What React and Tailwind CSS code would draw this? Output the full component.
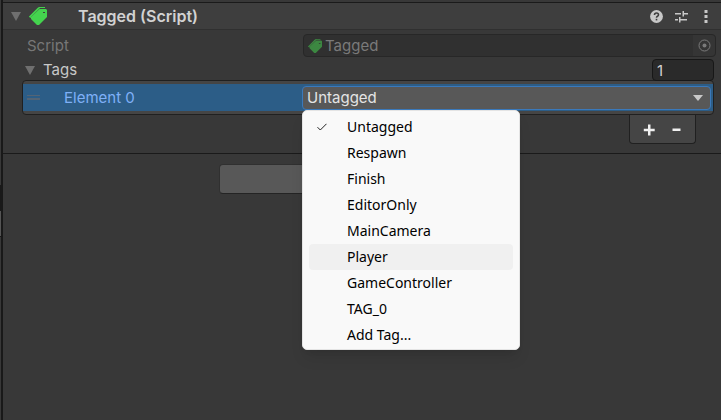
import React from "react";

const TAGS = [
  "Untagged",
  "Respawn",
  "Finish",
  "EditorOnly",
  "MainCamera",
  "Player",
  "GameController",
  "TAG_0",
  "Add Tag...",
];

function TagIcon({ className }) {
  return (
    <svg viewBox="0 0 18 18" className={className} aria-hidden="true">
      <path d="M0 9.5 8.5 1 10 0h6v1h-5L2 10v1L0 10z" fill="currentColor" />
      <path
        fillRule="evenodd"
        d="M10.5 2H17l1 1v7l-8 8H8l-6-6v-2zM14 5v1h2V5z"
        fill="currentColor"
      />
    </svg>
  );
}

function Triangle({ className }) {
  return (
    <svg viewBox="0 0 10 9" className={className} aria-hidden="true">
      <path d="M0 0h10L5 9z" fill="currentColor" />
    </svg>
  );
}

function Header() {
  return (
    <header className="flex h-[27px] items-center border-b border-[#303030] bg-[#3e3e3e] px-2">
      <button type="button" aria-label="Collapse component" className="text-[#6f6f6f]">
        <Triangle className="block h-[9px] w-[10px]" />
      </button>
      <TagIcon className="ml-2 h-[18px] w-[18px] text-[#44d34e]" />
      <h1 className="ml-[31px] flex-1 text-base leading-5 font-semibold text-[#d2d2d2]">Tagged (Script)</h1>
      <div className="flex items-center gap-3 text-[#c8c8c8]">
        <button type="button" aria-label="Help">
          <svg viewBox="0 0 13 13" className="block h-[13px] w-[13px]">
            <circle cx="6.5" cy="6.5" r="6.4" fill="currentColor" />
            <path d="M4.5 5q0-2 2-2t2 1.8q0 .9-1 1.4t-1 1.5" fill="none" stroke="#3e3e3e" strokeWidth="1.6" />
            <path d="M5.7 8.8h1.6v1.6H5.7z" fill="#3e3e3e" />
          </svg>
        </button>
        <button type="button" aria-label="Presets">
          <svg viewBox="0 0 13 13" className="block h-[13px] w-[13px]">
            <path d="M0 3h6v1.4H0zM7.500 1H9v5.500H7.500zM9 3h4v1.400H9zM0 9h3v1.400H0zM4 7h1.500v5.500H4zM5.500 9H12v1.400H5.500z" fill="currentColor" />
          </svg>
        </button>
        <button type="button" aria-label="More options" className="w-[13px]">
          <svg viewBox="0 0 13 13" className="block h-[13px] w-[13px]">
            <path d="M4.500 0h3v3h-3zM4.500 5h3v3h-3zM4.500 10h3v3h-3z" fill="currentColor" />
          </svg>
        </button>
      </div>
    </header>
  );
}

function TagMenu() {
  return (
    <ul
      role="listbox"
      aria-label="Tag"
      className="absolute top-full left-0 z-10 w-[218px] rounded-[5px] border border-[#e4e4e4] bg-[#f9f9f9] px-[6px] pt-[3px] pb-[1px] font-['Noto_Sans','Open_Sans',sans-serif] text-sm text-black shadow-lg"
    >
      {TAGS.map((tag) => (
        <li
          key={tag}
          role="option"
          aria-selected={tag === "Untagged"}
          className={`flex h-[26px] items-center rounded-[4px] ${tag === "Player" ? "bg-[#f0f0f0]" : ""}`}
        >
          <span className="flex w-[38px] pl-2">
            {tag === "Untagged" && (
              <svg viewBox="0 0 10 8" className="h-2 w-[10px]" aria-hidden="true">
                <path d="M.5 4.2 3.3 7 9.5.8" fill="none" stroke="#222" />
              </svg>
            )}
          </span>
          {tag}
        </li>
      ))}
    </ul>
  );
}

function ScriptRow() {
  return (
    <div className="flex h-[23px] items-center">
      <label htmlFor="script" className="w-[276px] text-[#777]">
        Script
      </label>
      <div className="flex h-[23px] min-w-0 flex-1 items-center rounded-[4px] border border-[#272727] bg-[#303030] text-[#7a7a7a]">
        <TagIcon className="ml-1 h-[14px] w-[14px] text-[#3c8741]" />
        <input
          id="script"
          readOnly
          value="Tagged"
          className="ml-[3px] min-w-0 flex-1 bg-transparent outline-none"
        />
        <button
          type="button"
          aria-label="Select script"
          className="flex h-full w-[22px] items-center justify-center rounded-r-[4px] bg-[#353535]"
        >
          <svg viewBox="0 0 13 13" className="h-[13px] w-[13px]">
            <circle cx="6.5" cy="6.5" r="5.5" fill="none" stroke="currentColor" />
            <circle cx="6.5" cy="6.5" r="2" fill="currentColor" />
          </svg>
        </button>
      </div>
    </div>
  );
}

function TagList() {
  return (
    <section className="-ml-[5px] mr-[2px]">
      <div className="rounded-[4px] border border-[#202020] bg-[#454545] py-[3px]">
        <div className="flex h-[27px] items-center bg-[#2c5d87] pr-[2px]">
          <svg viewBox="0 0 13 6" className="ml-1 h-[6px] w-[13px]" aria-hidden="true">
            <path d="M0 0h13v1H0zM0 3h13v2H0z" fill="#536475" />
          </svg>
          <label htmlFor="element-0" className="ml-6 w-[238px] text-[#7fb0f7]">
            Element 0
          </label>
          <div className="relative min-w-0 flex-1">
            <select
              id="element-0"
              defaultValue="Untagged"
              className="block h-6 w-full appearance-none rounded-[4px] border border-[#3a79bb] bg-[#585858] px-1 text-[#e4e4e4] outline-none"
            >
              {TAGS.map((tag) => (
                <option key={tag}>{tag}</option>
              ))}
            </select>
            <svg viewBox="0 0 10 6" className="pointer-events-none absolute top-[9px] right-2 h-[6px] w-[10px]" aria-hidden="true">
              <path d="M0 0h10L5 6z" fill="#c8c8c8" />
            </svg>
            <TagMenu />
          </div>
        </div>
      </div>
      <div className="mr-[18px] ml-auto flex h-[29px] w-[67px] items-center justify-center gap-4 rounded-b-[4px] border border-t-0 border-[#202020] bg-[#454545]">
        <button type="button" aria-label="Add element">
          <svg viewBox="0 0 12 12" className="mt-[2px] block h-3 w-3">
            <path d="M5 .5h2.500v4.200h4.200v2.600H7.500v4.200H5V7.300H.8V4.700H5z" fill="#f0f0f0" />
          </svg>
        </button>
        <button type="button" aria-label="Remove element">
          <svg viewBox="0 0 12 12" className="mt-[2px] block h-3 w-3">
            <path d="M1.500 4.500h8V7h-8z" fill="#f0f0f0" />
          </svg>
        </button>
      </div>
    </section>
  );
}

export default function App() {
  return (
    <div className="flex min-h-screen bg-[#383838] font-['Inter',sans-serif] text-[15px] leading-5 text-[#c8c8c8]">
      <div className="flex w-[3px] flex-col bg-[#191919]">
        <div className="h-[185px] w-px bg-[#383838]" />
        <div className="mt-[26px] h-[25px] w-px bg-[#555]" />
        <div className="mt-px w-px flex-1 bg-[#383838]" />
      </div>
      <main className="min-w-0 flex-1">
        <div className="h-[3px] border-b border-[#1a1a1a]" />
        <Header />
        <div className="border-b border-[#1a1a1a] pt-1 pr-[5px] pb-[9px] pl-6">
          <ScriptRow />
          <div className="mt-[2px] flex h-[22px] items-center pr-[2px]">
            <button type="button" aria-label="Collapse tags" className="-ml-[2px] text-[#6f6f6f]">
              <Triangle className="block h-[9px] w-[10px]" />
            </button>
            <label htmlFor="tag-count" className="ml-2 flex-1">
              Tags
            </label>
            <input
              id="tag-count"
              defaultValue="1"
              className="h-[22px] w-[62px] rounded-[4px] border border-[#171717] bg-[#2a2a2a] px-1 text-[#d2d2d2] outline-none"
            />
          </div>
          <div className="-mt-px">
            <TagList />
          </div>
        </div>
        <div className="flex justify-center pt-[10px]">
          <button
            type="button"
            aria-label="Add Component"
            className="h-[30px] w-[286px] rounded-[4px] border border-[#303030] border-b-[#242424] bg-[#585858]"
          />
        </div>
      </main>
    </div>
  );
}
